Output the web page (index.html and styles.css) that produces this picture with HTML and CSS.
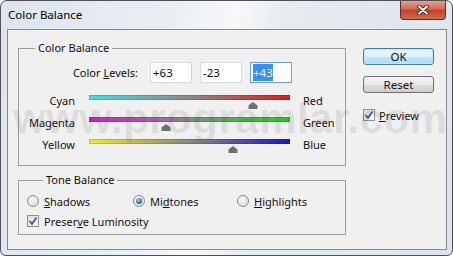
FILE: index.html
```html
<!DOCTYPE html>
<html lang="en">
<head>
    <meta charset="UTF-8">
    <title>Color Balance</title>
    <link rel="stylesheet" href="styles.css">
</head>
<body>

    <div class="window">
        <div class="titlebar">
            <span class="title">Color Balance</span>
            <div class="close">
                <svg width="12" height="10" viewBox="0 0 12 10">
                    <path d="M2 1.5 L10 8.5 M10 1.5 L2 8.5" stroke="#5a2a22" stroke-width="4" stroke-linecap="round"/>
                    <path d="M2 1.5 L10 8.5 M10 1.5 L2 8.5" stroke="#fff" stroke-width="2" stroke-linecap="round"/>
                </svg>
            </div>
        </div>

        <div class="client">
            <div class="main">
                <fieldset class="group balance">
                    <legend>Color Balance</legend>
                    <div class="levels">
                        <span class="levels-label">Color <u>L</u>evels:</span>
                        <div class="level">+63</div>
                        <div class="level">-23</div>
                        <div class="level active"><span class="sel">+43</span></div>
                    </div>

                    <div class="slider-row">
                        <span class="side-left">Cyan</span>
                        <div class="track">
                            <div class="bar cyan-red"></div>
                            <svg class="thumb" style="left: 81.5%" width="10" height="7" viewBox="0 0 10 7"><path d="M5 0 L9.5 3.5 L9.5 7 L0.5 7 L0.5 3.5 Z" fill="#6f6f6f"/></svg>
                        </div>
                        <span class="side-right">Red</span>
                    </div>
                    <div class="slider-row">
                        <span class="side-left">Magenta</span>
                        <div class="track">
                            <div class="bar magenta-green"></div>
                            <svg class="thumb" style="left: 38.5%" width="10" height="7" viewBox="0 0 10 7"><path d="M5 0 L9.5 3.5 L9.5 7 L0.5 7 L0.5 3.5 Z" fill="#6f6f6f"/></svg>
                        </div>
                        <span class="side-right">Green</span>
                    </div>
                    <div class="slider-row">
                        <span class="side-left">Yellow</span>
                        <div class="track">
                            <div class="bar yellow-blue"></div>
                            <svg class="thumb" style="left: 71.5%" width="10" height="7" viewBox="0 0 10 7"><path d="M5 0 L9.5 3.5 L9.5 7 L0.5 7 L0.5 3.5 Z" fill="#6f6f6f"/></svg>
                        </div>
                        <span class="side-right">Blue</span>
                    </div>
                </fieldset>

                <fieldset class="group tone">
                    <legend>Tone Balance</legend>
                    <div class="radios">
                        <div class="option"><span class="radio"></span><span><u>S</u>hadows</span></div>
                        <div class="option"><span class="radio on"><span class="dot"></span></span><span>Mi<u>d</u>tones</span></div>
                        <div class="option"><span class="radio"></span><span><u>H</u>ighlights</span></div>
                    </div>
                    <div class="option">
                        <span class="check"><svg width="10" height="10" viewBox="0 0 10 10"><path d="M1.5 5 L4 8 L8.5 1.5" fill="none" stroke="#3d5a9e" stroke-width="1.8"/></svg></span>
                        <span>Preser<u>v</u>e Luminosity</span>
                    </div>
                </fieldset>
            </div>

            <div class="side">
                <div class="button default">OK</div>
                <div class="button">Reset</div>
                <div class="option preview">
                    <span class="check"><svg width="10" height="10" viewBox="0 0 10 10"><path d="M1.5 5 L4 8 L8.5 1.5" fill="none" stroke="#3d5a9e" stroke-width="1.8"/></svg></span>
                    <span><u>P</u>review</span>
                </div>
            </div>
        </div>

        <!-- site watermark sits over the dialog -->
        <div class="watermark">www.programlar.com</div>
    </div>

</body>
</html>
```

FILE: styles.css
```css
body {
    margin: 0;
    background-color: #fff;
    font-family: 'Noto Sans', sans-serif;
    font-size: 11px;
    color: #111;
}

.window {
    position: relative;
    width: 451px;
    height: 254px;
    border: 1px solid #4d5056;
    border-radius: 7px 7px 6px 6px;
    background: linear-gradient(100deg, #dde4ec 0%, #eaeff4 35%, #f7f8fa 48%, #e6ebf0 58%, #dde4eb 100%);
    display: flex;
    flex-direction: column;
    overflow: hidden;
}

.titlebar {
    height: 28px;
    display: flex;
    justify-content: space-between;
    align-items: flex-start;
}

.title {
    padding: 7px 0 0 7px;
    font-size: 11.5px;
    line-height: 14px;
    color: #000;
}

.close {
    width: 44px;
    height: 19px;
    margin: -1px 6px 0 0;
    border: 1px solid #6b2b20;
    border-top: none;
    border-radius: 0 0 4px 4px;
    background: linear-gradient(#e9a797, #d36d55 45%, #c2432a 55%, #d26a4d);
    display: flex;
    justify-content: center;
    align-items: center;
}

.client {
    flex: 1;
    margin: 0 5px 5px 6px;
    border: 1px solid #858a91;
    background-color: #f0f0f0;
    display: flex;
    align-items: flex-start;
}

.main {
    margin: 11px 0 0 10px;
    width: 328px;
}

.group {
    margin: 0;
    border: 1px solid #9c9c9c;
    padding: 0;
}

.group legend {
    margin-left: 16px;
    padding: 0 3px;
    line-height: 14px;
}

.balance {
    padding-bottom: 10px;
}

.levels {
    display: flex;
    align-items: center;
    margin-top: 7px;
    height: 21px;
}

.levels-label {
    width: 121px;
    text-align: right;
    margin-right: 10px;
    padding-right: 2px;
    box-sizing: border-box;
}

.level {
    width: 38px;
    height: 19px;
    margin-right: 8px;
    padding-left: 2px;
    border: 1px solid #dadada;
    background-color: #fff;
    line-height: 19px;
    font-size: 11.5px;
}

.level.active {
    border-color: #6f9fd8;
}

.sel {
    background-color: #3390ff;
    color: #fff;
    padding: 1px 0;
}

.slider-row {
    display: flex;
    align-items: flex-start;
    height: 22px;
}

.levels + .slider-row {
    margin-top: 6px;
}

.side-left {
    width: 56px;
    text-align: right;
    margin-right: 14px;
    line-height: 14px;
    padding-top: 5px;
}

.side-right {
    margin-left: 13px;
    line-height: 14px;
    padding-top: 5px;
}

.track {
    position: relative;
    width: 201px;
    height: 22px;
}

.bar {
    margin-top: 6px;
    height: 5px;
    box-shadow: inset 0 0 0 1px rgba(0, 0, 0, 0.15);
}

.cyan-red {
    background: linear-gradient(90deg, #3de0e0, #8a8a8a 50%, #e01c1c);
}

.magenta-green {
    background: linear-gradient(90deg, #d21fd2, #888 50%, #1fd21f);
}

.yellow-blue {
    background: linear-gradient(90deg, #f0ea1e, #8a8a80 50%, #1818c8);
}

.thumb {
    position: absolute;
    top: 13px;
    margin-left: -5px;
}

.tone {
    margin-top: 7px;
    padding: 6px 0 5px 8px;
}

.radios {
    display: grid;
    grid-template-columns: 106px 104px auto;
    height: 16px;
    margin-bottom: 4px;
}

.option {
    display: flex;
    align-items: center;
    gap: 5px;
    height: 16px;
}

.radio {
    width: 10px;
    height: 10px;
    border: 1px solid #8c8e90;
    border-radius: 50%;
    background: radial-gradient(circle at 40% 35%, #fafafa, #d4d4d4);
    display: flex;
    justify-content: center;
    align-items: center;
}

.dot {
    width: 6px;
    height: 6px;
    border-radius: 50%;
    background: radial-gradient(circle at 40% 35%, #9ad6f7, #1f5f94 70%);
}

.check {
    width: 10px;
    height: 10px;
    border: 1px solid #8f8f8f;
    background: linear-gradient(135deg, #dcdcdc, #fdfdfd);
    display: flex;
    justify-content: center;
    align-items: center;
}

.side {
    margin: 18px 0 0 17px;
    width: 71px;
    display: flex;
    flex-direction: column;
}

.button {
    height: 15px;
    border: 1px solid #707070;
    border-radius: 3px;
    background: linear-gradient(#f3f3f3, #ebebeb 50%, #dddddd 50%, #cfcfcf);
    text-align: center;
    line-height: 15px;
    font-size: 11.5px;
    margin-bottom: 11px;
}

.button.default {
    border-color: #3c7fb1;
    background: linear-gradient(#ecf7fd, #dcf1fc 50%, #c2e6f8 50%, #aedcf3);
    box-shadow: inset 0 0 0 1px #bfe6fa;
}

.preview {
    margin-top: 3px;
    gap: 4px;
}

.watermark {
    position: absolute;
    left: 12px;
    top: 94px;
    font-family: 'Liberation Sans', sans-serif;
    font-weight: bold;
    font-size: 42px;
    letter-spacing: 0.5px;
    color: rgba(80, 80, 80, 0.13);
    pointer-events: none;
}
```
